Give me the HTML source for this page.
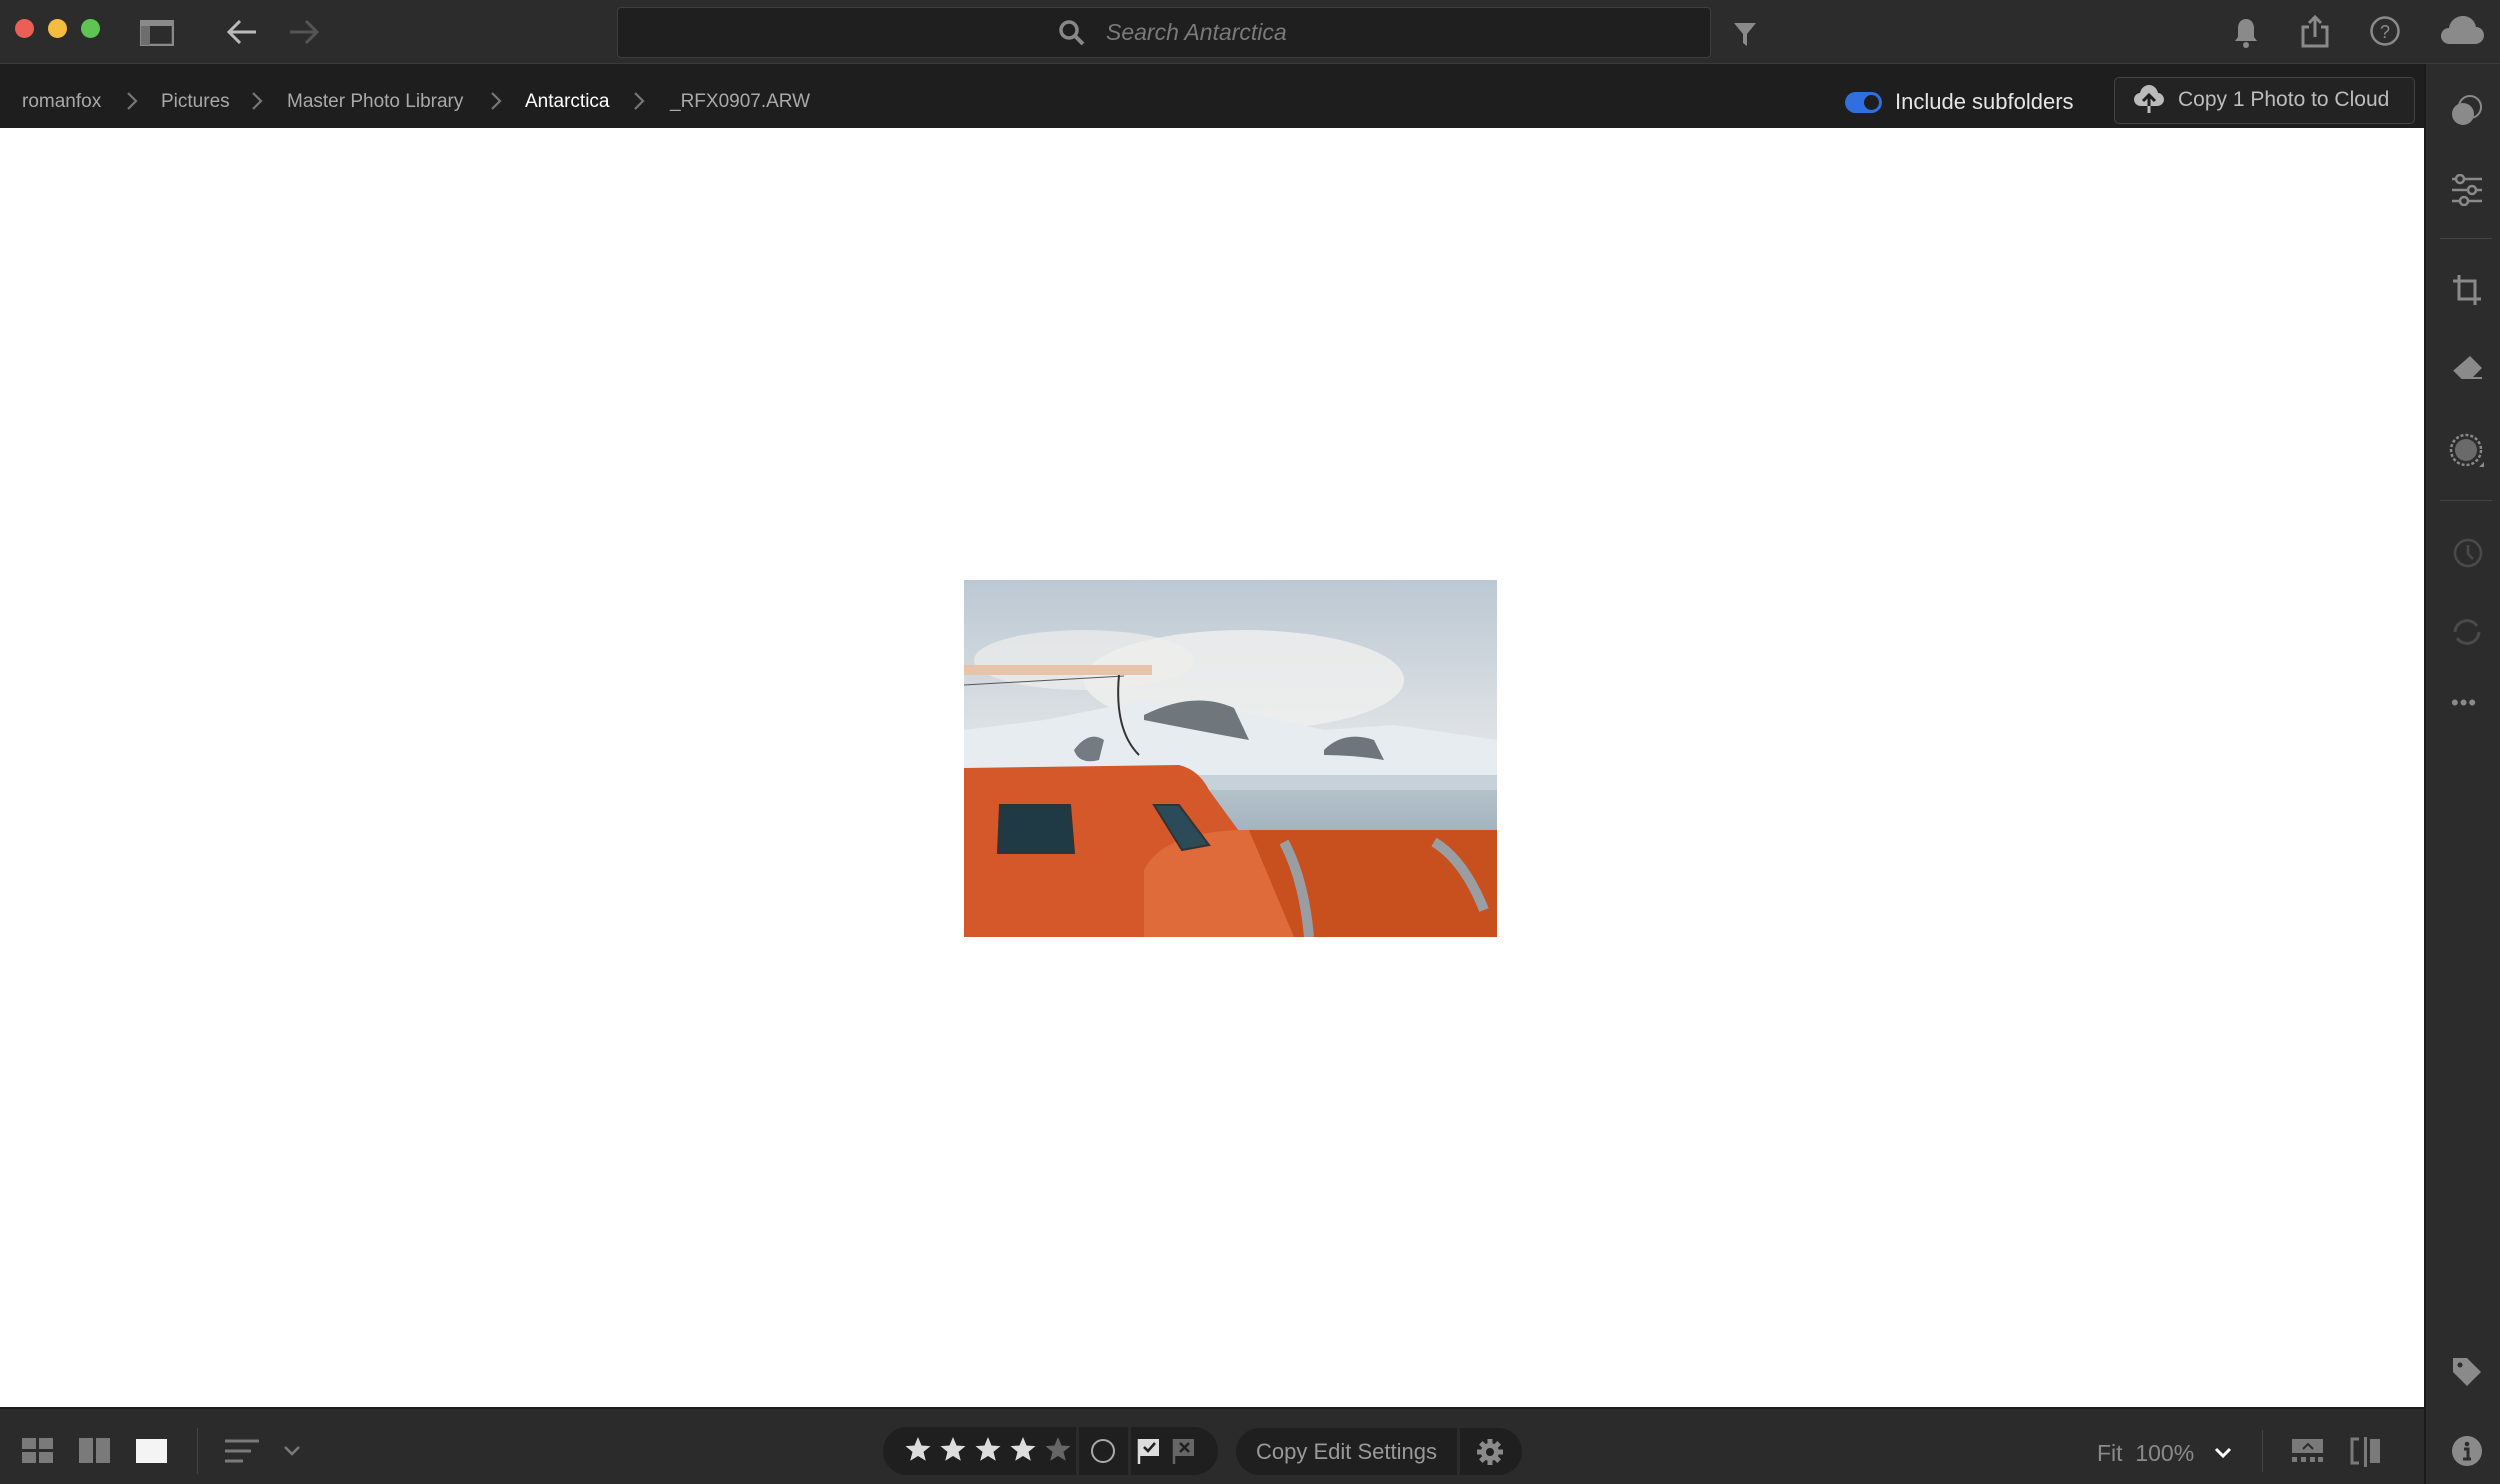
<!DOCTYPE html>
<html><head><meta charset="utf-8">
<style>
*{margin:0;padding:0;box-sizing:border-box}
html,body{width:2500px;height:1484px;overflow:hidden;background:#fff;font-family:"Liberation Sans","DejaVu Sans",sans-serif}
.abs{position:absolute}
#top{left:0;top:0;width:2500px;height:64px;background:#2c2c2c;border-bottom:1px solid #3a3a3a}
#crumb{left:0;top:64px;width:2424px;height:64px;background:#1e1e1e}
#side{left:2424px;top:64px;width:76px;height:1420px;background:#2c2c2c;border-left:2px solid #1a1a1a}
#bot{left:0;top:1407px;width:2424px;height:77px;background:#2b2b2b;border-top:2px solid #1c1c1c}
.dot{width:19px;height:19px;border-radius:50%;top:19px}
.bc{top:91px;font-size:19px;color:#a9a9a9;white-space:nowrap}
.pill{background:#1f1f1f;border-radius:24px}
</style></head><body>
<div id="top" class="abs"></div>
<div class="abs dot" style="left:15px;background:#ec5f57"></div>
<div class="abs dot" style="left:48px;background:#f5bd3f"></div>
<div class="abs dot" style="left:81px;background:#5fc552"></div>
<svg class="abs" style="left:140px;top:20px" width="34" height="26" viewBox="0 0 34 26"><rect x="1" y="1" width="32" height="24" fill="none" stroke="#8a8a8a" stroke-width="2.5"/><rect x="1" y="1" width="32" height="5" fill="#8a8a8a"/><rect x="1" y="6" width="9" height="19" fill="#6d6d6d"/></svg>
<svg class="abs" style="left:226px;top:18px" width="32" height="28" viewBox="0 0 32 28"><path d="M30 14H4M14 3L3 14l11 11" fill="none" stroke="#bbb" stroke-width="3"/></svg>
<svg class="abs" style="left:288px;top:18px" width="32" height="28" viewBox="0 0 32 28"><path d="M2 14h26M18 3l11 11-11 11" fill="none" stroke="#555" stroke-width="3"/></svg>
<div class="abs" style="left:617px;top:7px;width:1094px;height:51px;background:#1f1f1f;border:1px solid #3e3e3e;border-radius:4px"></div>
<svg class="abs" style="left:1058px;top:19px" width="28" height="28" viewBox="0 0 28 28"><circle cx="11" cy="11" r="8" fill="none" stroke="#888" stroke-width="3.5"/><path d="M17 17l8 8" stroke="#888" stroke-width="4"/></svg>
<div class="abs" style="left:1106px;top:19px;font-size:23px;font-style:italic;color:#7a7a7a">Search Antarctica</div>
<svg class="abs" style="left:1733px;top:21px" width="24" height="26" viewBox="0 0 24 26"><path d="M1 2h22l-9 11v12l-4-3v-9z" fill="#8a8a8a"/></svg>
<svg class="abs" style="left:2233px;top:17px" width="26" height="32" viewBox="0 0 26 32"><path d="M13 2c-5 0-8 4-8 9v9l-3 4h22l-3-4v-9c0-5-3-9-8-9z" fill="#8a8a8a"/><circle cx="13" cy="28" r="3" fill="#8a8a8a"/></svg>
<svg class="abs" style="left:2300px;top:14px" width="30" height="34" viewBox="0 0 30 34"><path d="M9 13H3v19h24V13h-6M15 23V3M9 9l6-6 6 6" fill="none" stroke="#8a8a8a" stroke-width="3"/></svg>
<svg class="abs" style="left:2369px;top:15px" width="32" height="32" viewBox="0 0 32 32"><circle cx="16" cy="16" r="13.5" fill="none" stroke="#8a8a8a" stroke-width="2.5"/><text x="16" y="23" font-size="18" text-anchor="middle" fill="#8a8a8a" font-family="Liberation Sans">?</text></svg>
<svg class="abs" style="left:2440px;top:14px" width="44" height="32" viewBox="0 0 44 32"><path d="M10 30C4 30 1 26 1 22s3-8 8-8c1-7 7-12 14-12s12 5 13 11c5 0 8 4 8 8.5S40 30 35 30z" fill="#8a8a8a"/></svg>

<div id="crumb" class="abs"></div>
<div class="abs bc" style="left:22px">romanfox</div>
<svg class="abs" style="left:126px;top:91px" width="12" height="20" viewBox="0 0 12 20"><path d="M2 2l8 8-8 8" stroke="#777" stroke-width="2.2" fill="none"/></svg>
<div class="abs bc" style="left:161px">Pictures</div>
<svg class="abs" style="left:251px;top:91px" width="12" height="20" viewBox="0 0 12 20"><path d="M2 2l8 8-8 8" stroke="#777" stroke-width="2.2" fill="none"/></svg>
<div class="abs bc" style="left:287px">Master Photo Library</div>
<svg class="abs" style="left:490px;top:91px" width="12" height="20" viewBox="0 0 12 20"><path d="M2 2l8 8-8 8" stroke="#777" stroke-width="2.2" fill="none"/></svg>
<div class="abs bc" style="left:525px;color:#fff">Antarctica</div>
<svg class="abs" style="left:633px;top:91px" width="12" height="20" viewBox="0 0 12 20"><path d="M2 2l8 8-8 8" stroke="#777" stroke-width="2.2" fill="none"/></svg>
<div class="abs bc" style="left:670px">_RFX0907.ARW</div>
<div class="abs" style="left:1845px;top:92px;width:37px;height:21px;border-radius:11px;background:#2f6fe0"></div>
<div class="abs" style="left:1864px;top:95px;width:15px;height:15px;border-radius:50%;background:#1e1e1e"></div>
<div class="abs" style="left:1895px;top:89px;font-size:22px;color:#e6e6e6">Include subfolders</div>
<div class="abs" style="left:2114px;top:77px;width:301px;height:47px;border:1px solid #444;border-radius:5px;background:#232323"></div>
<svg class="abs" style="left:2133px;top:84px" width="32" height="30" viewBox="0 0 32 30"><path d="M8 22C4 22 1 19 1 15.5S4 9 7 9c1-5 5-8 9-8s8 3 9 8c3 0 6 3 6 6.5S28 22 24 22z" fill="#bbb"/><path d="M16 29V11M10 17l6-6 6 6" stroke="#1e1e1e" stroke-width="3" fill="none"/><path d="M16 29V22" stroke="#bbb" stroke-width="3"/></svg>
<div class="abs" style="left:2178px;top:88px;font-size:21px;color:#bdbdbd">Copy 1 Photo to Cloud</div>

<!-- photo -->
<svg class="abs" style="left:964px;top:580px" width="533" height="357" viewBox="0 0 533 357">
<defs><linearGradient id="sky" x1="0" y1="0" x2="0" y2="1"><stop offset="0" stop-color="#bcc8d3"/><stop offset="0.5" stop-color="#e3e6e8"/><stop offset="1" stop-color="#d9e0e6"/></linearGradient>
<linearGradient id="sea" x1="0" y1="0" x2="0" y2="1"><stop offset="0" stop-color="#b4c2cb"/><stop offset="1" stop-color="#8598a4"/></linearGradient></defs>
<rect width="533" height="357" fill="url(#sky)"/>
<ellipse cx="280" cy="100" rx="160" ry="50" fill="#f0f0ef" opacity=".8"/>
<ellipse cx="120" cy="80" rx="110" ry="30" fill="#eeeeec" opacity=".7"/>
<path d="M0 150 L80 140 L180 120 L270 130 L360 150 L430 145 L533 160 L533 210 L0 210z" fill="#e7ecf0"/>
<path d="M180 135 Q230 110 270 128 L285 160 Q230 150 180 140z" fill="#6f767c"/>
<path d="M110 170 Q125 150 140 160 L135 180 Q115 185 110 170z" fill="#747b82"/>
<path d="M360 170 Q380 150 410 160 L420 180 Q390 175 360 175z" fill="#6e757c"/>
<rect x="0" y="195" width="533" height="20" fill="#c6d1d9"/>
<rect x="0" y="210" width="533" height="115" fill="url(#sea)"/>
<rect x="0" y="85" width="188" height="10" fill="#e7c3a9"/>
<path d="M0 105 L160 96" stroke="#555" stroke-width="1"/>
<path d="M155 95 Q150 150 175 175" stroke="#333" stroke-width="2" fill="none"/>
<path d="M0 188 L215 185 Q235 190 245 210 L280 258 L533 258 L533 357 L0 357z" fill="#d4582a"/>
<path d="M280 250 L533 250 L533 357 L330 357z" fill="#c8501f"/>
<path d="M180 290 Q200 250 285 250 L330 357 L180 357z" fill="#df6a3a"/>
<path d="M36 225 L106 225 L110 273 L34 273z" fill="#1f3a45" stroke="#333" stroke-width="2"/>
<path d="M190 225 L215 225 L245 265 L218 270z" fill="#2b4b58" stroke="#333" stroke-width="2"/>
<path d="M320 262 Q340 300 345 357" stroke="#9a9ea2" stroke-width="10" fill="none"/>
<path d="M470 262 Q500 280 520 330" stroke="#9a9ea2" stroke-width="10" fill="none"/>
</svg>

<div id="side" class="abs"></div>
<svg class="abs" style="left:2450px;top:94px" width="34" height="34" viewBox="0 0 34 34"><circle cx="20" cy="13" r="11" fill="none" stroke="#8a8a8a" stroke-width="2"/><circle cx="13" cy="20" r="11" fill="#8a8a8a"/></svg>
<svg class="abs" style="left:2450px;top:174px" width="34" height="32" viewBox="0 0 34 32"><path d="M2 5h30M2 16h30M2 27h30" stroke="#8a8a8a" stroke-width="2.5"/><circle cx="10" cy="5" r="4" fill="#2c2c2c" stroke="#8a8a8a" stroke-width="2.5"/><circle cx="22" cy="16" r="4" fill="#2c2c2c" stroke="#8a8a8a" stroke-width="2.5"/><circle cx="14" cy="27" r="4" fill="#2c2c2c" stroke="#8a8a8a" stroke-width="2.5"/></svg>
<div class="abs" style="left:2440px;top:238px;width:52px;height:1px;background:#444"></div>
<svg class="abs" style="left:2450px;top:272px" width="34" height="36" viewBox="0 0 34 36"><path d="M9 3v24h22M3 9h22v24" fill="none" stroke="#8a8a8a" stroke-width="3"/></svg>
<svg class="abs" style="left:2450px;top:354px" width="34" height="32" viewBox="0 0 34 32"><path d="M20 2l12 12-10 10H12L4 16z" fill="#8a8a8a"/><path d="M4 16l8 8h20" fill="none" stroke="#8a8a8a" stroke-width="2"/></svg>
<svg class="abs" style="left:2449px;top:433px" width="36" height="36" viewBox="0 0 36 36"><circle cx="17" cy="17" r="15" fill="none" stroke="#8a8a8a" stroke-width="2.5" stroke-dasharray="3 2"/><circle cx="17" cy="17" r="11" fill="#6a6a6a"/><path d="M30 34h5v-5z" fill="#8a8a8a"/></svg>
<div class="abs" style="left:2440px;top:500px;width:52px;height:1px;background:#444"></div>
<svg class="abs" style="left:2450px;top:536px" width="34" height="34" viewBox="0 0 34 34"><circle cx="18" cy="17" r="13" fill="none" stroke="#4a4a4a" stroke-width="2.5"/><path d="M18 9v9l5 5" stroke="#4a4a4a" stroke-width="2.5" fill="none"/></svg>
<svg class="abs" style="left:2450px;top:615px" width="34" height="34" viewBox="0 0 34 34"><path d="M5 17a12 12 0 0 1 22-6M29 17a12 12 0 0 1-22 6" stroke="#4a4a4a" stroke-width="3" fill="none"/></svg>
<div class="abs" style="left:2451px;top:690px;font-size:22px;color:#8a8a8a;letter-spacing:1px">•••</div>
<svg class="abs" style="left:2451px;top:1356px" width="32" height="32" viewBox="0 0 32 32"><path d="M2 2h14l14 14-14 14L2 16z" fill="#8a8a8a"/><circle cx="9" cy="9" r="2.5" fill="#2c2c2c"/></svg>
<svg class="abs" style="left:2451px;top:1435px" width="32" height="32" viewBox="0 0 32 32"><circle cx="16" cy="16" r="15" fill="#8a8a8a"/><circle cx="16" cy="9" r="2.3" fill="#2c2c2c"/><path d="M13 14h4v10h2M12 24h8" stroke="#2c2c2c" stroke-width="3" fill="none"/></svg>

<div id="bot" class="abs"></div>
<svg class="abs" style="left:22px;top:1438px" width="32" height="26" viewBox="0 0 32 26"><rect x="0" y="0" width="14" height="11" fill="#7a7a7a"/><rect x="17" y="0" width="14" height="11" fill="#7a7a7a"/><rect x="0" y="14" width="14" height="11" fill="#7a7a7a"/><rect x="17" y="14" width="14" height="11" fill="#7a7a7a"/></svg>
<svg class="abs" style="left:79px;top:1438px" width="32" height="26" viewBox="0 0 32 26"><rect x="0" y="0" width="14" height="25" fill="#7a7a7a"/><rect x="17" y="0" width="14" height="25" fill="#7a7a7a"/></svg>
<div class="abs" style="left:136px;top:1439px;width:31px;height:24px;background:#f4f4f4"></div>
<div class="abs" style="left:197px;top:1428px;width:1px;height:46px;background:#444"></div>
<svg class="abs" style="left:225px;top:1439px" width="34" height="24" viewBox="0 0 34 24"><path d="M0 2h34M0 12h26M0 22h18" stroke="#7a7a7a" stroke-width="3"/></svg>
<svg class="abs" style="left:283px;top:1445px" width="18" height="12" viewBox="0 0 18 12"><path d="M2 2l7 7 7-7" stroke="#7a7a7a" stroke-width="2.5" fill="none"/></svg>

<div class="abs pill" style="left:883px;top:1427px;width:335px;height:48px"></div>
<div class="abs" style="left:1076px;top:1427px;width:3px;height:48px;background:#2b2b2b"></div>
<div class="abs" style="left:1128px;top:1427px;width:3px;height:48px;background:#2b2b2b"></div>
<svg class="abs" style="left:900px;top:1436px" width="180" height="28" viewBox="0 0 180 28">
<defs><path id="st" d="M13 1l3.5 8.5 9 .6-7 5.8 2.3 8.9L13 20l-7.8 4.8 2.3-8.9-7-5.8 9-.6z"/></defs>
<use href="#st" x="5" fill="#ddd"/><use href="#st" x="40" fill="#ddd"/><use href="#st" x="75" fill="#ddd"/><use href="#st" x="110" fill="#ddd"/><use href="#st" x="145" fill="#666"/></svg>
<div class="abs" style="left:1091px;top:1439px;width:24px;height:24px;border-radius:50%;border:2px solid #aaa"></div>
<svg class="abs" style="left:1137px;top:1437px" width="24" height="28" viewBox="0 0 24 28"><path d="M2 2v25" stroke="#ddd" stroke-width="2.5"/><rect x="3" y="2" width="19" height="17" fill="#ddd"/><path d="M7 10l4 4 7-8" stroke="#1f1f1f" stroke-width="2.5" fill="none"/></svg>
<svg class="abs" style="left:1172px;top:1437px" width="24" height="28" viewBox="0 0 24 28"><path d="M2 2v25" stroke="#666" stroke-width="2.5"/><rect x="3" y="2" width="19" height="17" fill="#666"/><path d="M8 6l9 9M17 6l-9 9" stroke="#1f1f1f" stroke-width="2.5"/></svg>
<div class="abs pill" style="left:1236px;top:1428px;width:286px;height:47px"></div>
<div class="abs" style="left:1457px;top:1428px;width:3px;height:47px;background:#2b2b2b"></div>
<div class="abs" style="left:1256px;top:1439px;font-size:22px;color:#999">Copy Edit Settings</div>
<svg class="abs" style="left:1476px;top:1438px" width="28" height="28" viewBox="0 0 28 28"><g fill="#8a8a8a"><circle cx="14" cy="14" r="9"/><rect x="11.5" y="1" width="5" height="26"/><rect x="1" y="11.5" width="26" height="5"/><rect x="11.5" y="1" width="5" height="26" transform="rotate(45 14 14)"/><rect x="11.5" y="1" width="5" height="26" transform="rotate(-45 14 14)"/></g><circle cx="14" cy="14" r="4" fill="#1f1f1f"/></svg>
<div class="abs" style="left:2097px;top:1440px;font-size:23px;color:#8a8a8a">Fit&nbsp; 100%</div>
<svg class="abs" style="left:2214px;top:1447px" width="18" height="12" viewBox="0 0 18 12"><path d="M2 2l7 7 7-7" stroke="#fff" stroke-width="3" fill="none"/></svg>
<div class="abs" style="left:2262px;top:1430px;width:1px;height:42px;background:#444"></div>
<svg class="abs" style="left:2292px;top:1439px" width="32" height="24" viewBox="0 0 32 24"><rect x="0" y="0" width="31" height="14" fill="#7a7a7a"/><path d="M11 10l5-5 5 5" stroke="#2b2b2b" stroke-width="2" fill="none"/><g fill="#7a7a7a"><rect x="0" y="18" width="5" height="5"/><rect x="9" y="18" width="5" height="5"/><rect x="18" y="18" width="5" height="5"/><rect x="26" y="18" width="5" height="5"/></g></svg>
<svg class="abs" style="left:2350px;top:1437px" width="32" height="30" viewBox="0 0 32 30"><path d="M9 2H2v24h7" stroke="#7a7a7a" stroke-width="3" fill="none"/><rect x="14" y="0" width="3" height="30" fill="#7a7a7a"/><rect x="20" y="2" width="10" height="24" fill="#7a7a7a"/></svg>
</body></html>
